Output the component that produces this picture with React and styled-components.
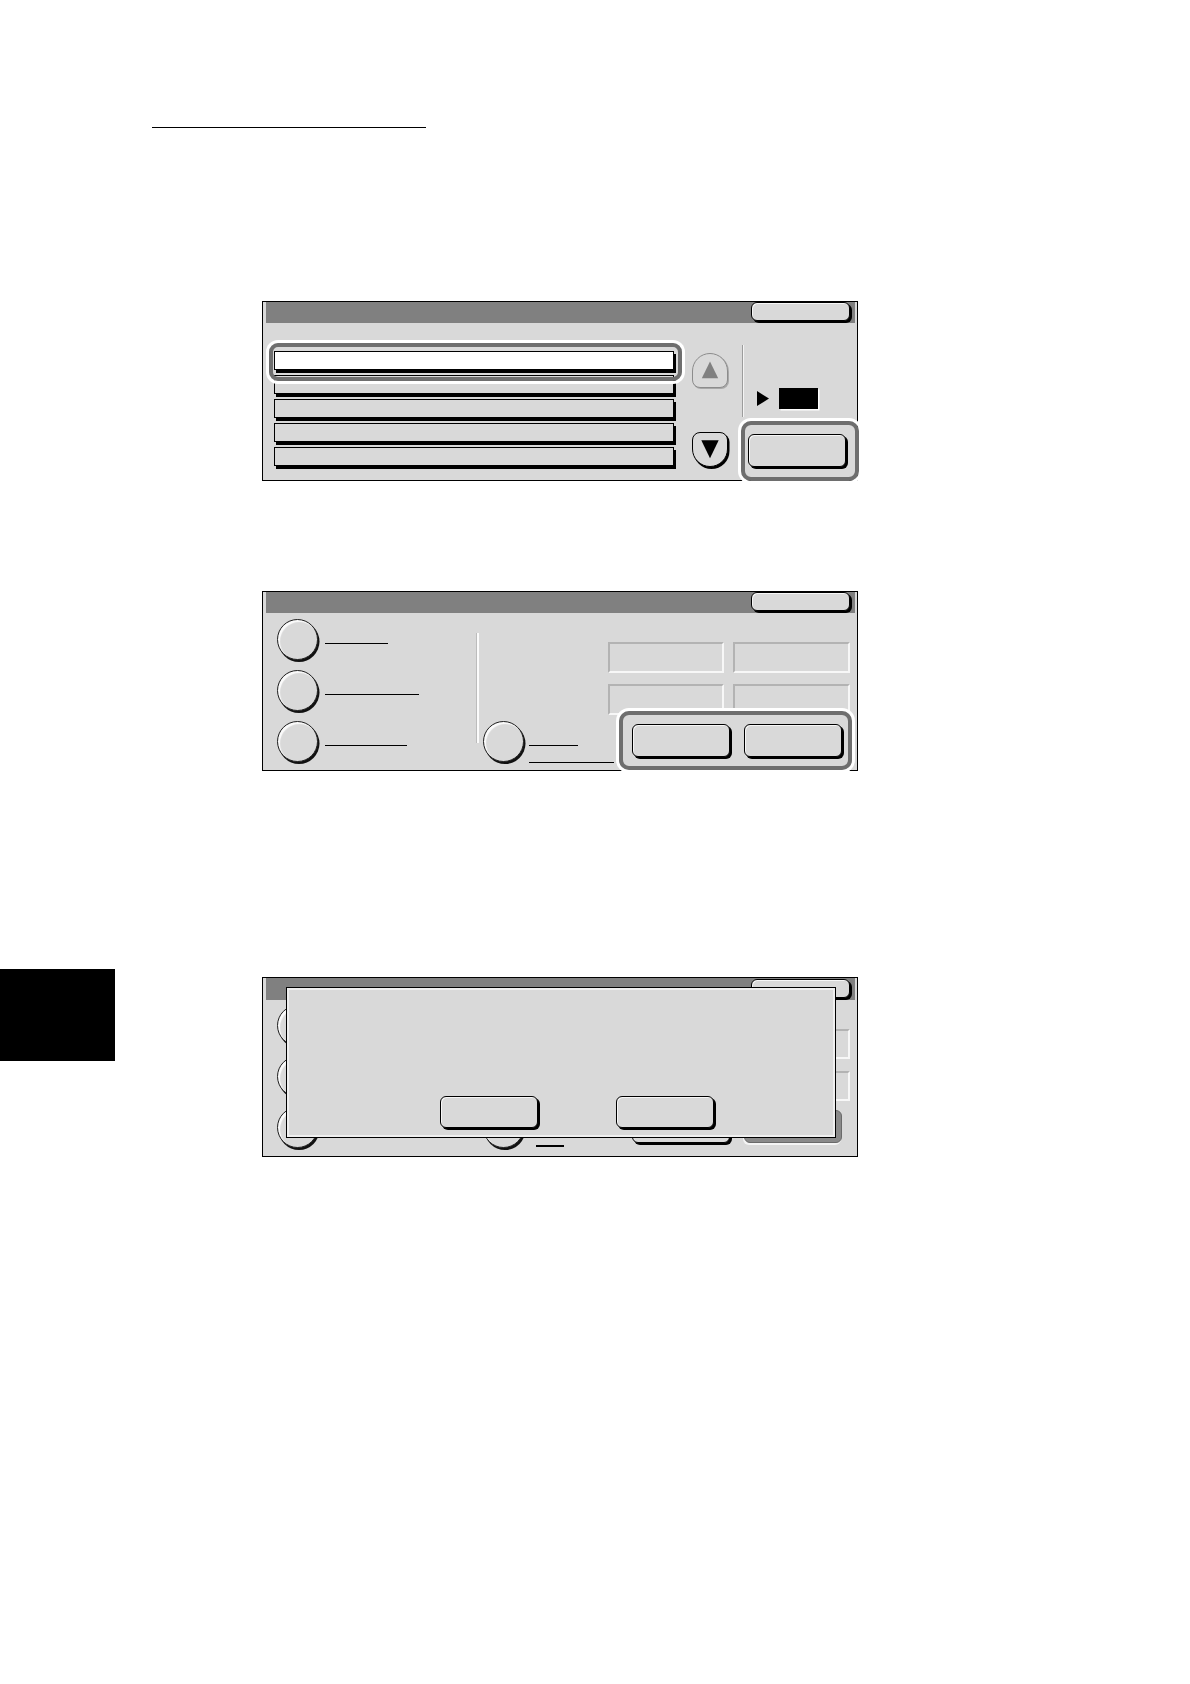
import React from 'react';
import styled, { createGlobalStyle, css } from 'styled-components';

const GlobalStyle = createGlobalStyle`
  html, body {
    margin: 0;
    padding: 0;
    background: #fff;
  }
  body {
    font-family: "Liberation Sans", Arial, sans-serif;
  }
`;

const Page = styled.div`
  width: 1190px;
  min-height: 1684px;
  box-sizing: border-box;
  padding-top: 127px;
  display: flex;
  flex-direction: column;
  align-items: flex-start;
`;

const HeadingRule = styled.div`
  width: 274px;
  margin-left: 152px;
  border-top: 1.3px solid #000;
`;

const Screen = styled.div`
  position: relative;
  box-sizing: border-box;
  width: 596px;
  height: ${p => p.$height}px;
  margin-top: ${p => p.$top}px;
  margin-left: ${p => p.$left}px;
  border: 1px solid #000;
  background: #d9d9d9;
  padding: 0 2px 2px 2.5px;
  display: flex;
  flex-direction: column;
  flex-shrink: 0;
`;

const TitleBar = styled.div`
  flex-shrink: 0;
  height: 21.5px;
  box-sizing: border-box;
  padding: 0.5px 5.5px 0 0;
  background: #808080;
  display: flex;
  justify-content: flex-end;
  align-items: flex-start;
`;

const Key = styled.div`
  flex-shrink: 0;
  box-sizing: border-box;
  width: ${p => p.$w || 98}px;
  height: ${p => p.$h || 33}px;
  border: 1px solid #000;
  border-radius: 6px;
  background: #d9d9d9;
  box-shadow: inset 1px 1px 0 #f6f6f6, 2px 2px 0 #000;
  ${p => p.$selected && css`
    border-color: #6a6a6a;
    background: #8a8a8a;
    box-shadow: -1px 2px 0 #f4f4f4;
  `}
`;

const Focus = styled.div`
  position: relative;
  z-index: 1;
  flex-shrink: 0;
  box-sizing: border-box;
  display: flex;
  align-items: flex-start;
  width: ${p => p.$w}px;
  height: ${p => p.$h}px;
  margin: ${p => p.$margin};
  padding: ${p => p.$pad};
  gap: ${p => p.$gap || 0}px;
  border: 4px solid ${p => (p.$on ? '#6e6e6e' : 'transparent')};
  border-radius: 10px;
  box-shadow: ${p => (p.$on ? '0 0 0 3px #fff' : 'none')};
`;

const Divider = styled.div`
  flex-shrink: 0;
  width: ${p => (p.$light ? 2 : 1)}px;
  height: ${p => p.$h}px;
  margin-top: ${p => p.$top}px;
  margin-left: ${p => p.$gap || 0}px;
  background: ${p => (p.$light ? '#fbfbfb' : '#9c9c9c')};
  box-shadow: ${p => (p.$light ? '-1px 0 0 #bcbcbc' : '1px 0 0 #f4f4f4')};
`;

/* list screen */

const ScreenBody = styled.div`
  flex: 1;
  display: flex;
  align-items: flex-start;
`;

const RowList = styled.div`
  flex-shrink: 0;
  display: flex;
  flex-direction: column;
  gap: 5px;
  margin: 27.8px 0 0 8.3px;
`;

const ListRow = styled.div`
  position: relative;
  box-sizing: border-box;
  width: 400px;
  height: 19px;
  border: 1px solid #000;
  background: ${p => (p.$active ? '#fff' : '#d9d9d9')};
  box-shadow: 2px 3px 0 #000;
  ${p => p.$active && css`
    z-index: 1;
    &::after {
      content: '';
      position: absolute;
      left: -6px;
      top: -8.7px;
      right: -8.7px;
      bottom: -12px;
      border: 4px solid #6e6e6e;
      border-radius: 9px;
      box-shadow: 0 0 0 3px #fff;
    }
  `}
`;

const ScrollCol = styled.div`
  flex-shrink: 0;
  display: flex;
  flex-direction: column;
  gap: 43.4px;
  margin: 29.5px 0 0 18.3px;
`;

const ScrollKey = styled.div`
  box-sizing: border-box;
  width: 36px;
  height: 35.5px;
  display: flex;
  align-items: center;
  justify-content: center;
  background: #d9d9d9;
  border: 1.5px solid ${p => (p.$disabled ? '#8c8c8c' : '#000')};
  border-radius: ${p => (p.$dir === 'up' ? '18px 18px 8px 8px' : '8px 8px 18px 18px')};
  box-shadow: ${p => (p.$disabled ? '1px 1px 0 #a8a8a8' : '1.5px 2px 0 #000')};
`;

const SideCol = styled.div`
  display: flex;
  flex-direction: column;
  align-items: flex-start;
  margin-top: 65.1px;
  padding-left: 14px;
`;

const Counter = styled.div`
  display: flex;
  align-items: center;
  gap: 10.7px;
`;

const CounterValue = styled.div`
  width: 38.7px;
  height: 20.7px;
  background: #000;
  box-shadow: 1.5px 1.5px 0 #fff;
`;

/* options screen */

const RadioCol = styled.div`
  flex-shrink: 0;
  box-sizing: border-box;
  width: 211px;
  padding: 5.5px 0 0 11px;
  display: flex;
  flex-direction: column;
  gap: 8px;
`;

const RadioRow = styled.div`
  display: flex;
  align-items: flex-start;
  height: 43px;
`;

const Radio = styled.div`
  flex-shrink: 0;
  box-sizing: border-box;
  width: 41px;
  height: 41px;
  border-radius: 50%;
  border: 1px solid #222;
  background: #d9d9d9;
  box-shadow: inset 2px 2px 1px #fbfbfb, 1.5px 2px 0 #111;
`;

const LeaderStack = styled.div`
  display: flex;
  flex-direction: column;
  align-items: flex-start;
`;

const Leader = styled.div`
  width: ${p => p.$w}px;
  height: 1.2px;
  background: #000;
  margin-top: ${p => p.$top}px;
  margin-left: ${p => p.$gap}px;
`;

const MidCol = styled.div`
  flex-shrink: 0;
  box-sizing: border-box;
  width: 129.6px;
  padding: 107.5px 0 0 4.6px;
`;

const RightCol = styled.div`
  flex-shrink: 0;
  display: flex;
  flex-direction: column;
  align-items: flex-start;
  padding-top: 28.8px;
`;

const FieldGrid = styled.div`
  display: grid;
  grid-template-columns: 115.7px 116.7px;
  grid-auto-rows: 30.4px;
  column-gap: 9.3px;
  row-gap: 11.6px;
`;

const Field = styled.div`
  box-sizing: border-box;
  border-style: solid;
  border-width: 2px;
  border-color: #b3b3b3 #f7f7f7 #f7f7f7 #b3b3b3;
  background: #d9d9d9;
`;

/* dialog */

const TabRow = styled.div`
  display: flex;
  align-items: flex-start;
  margin-top: 197.7px;
`;

const SectionTab = styled.div`
  flex-shrink: 0;
  width: 115px;
  height: 91.7px;
  background: #000;
`;

const Dialog = styled.div`
  position: absolute;
  z-index: 2;
  left: 23px;
  top: 8.7px;
  box-sizing: border-box;
  width: 549.5px;
  height: 151.5px;
  border: 1px solid #000;
  background: #d9d9d9;
  box-shadow: inset 0 0 0 2px #efefef;
  display: flex;
  align-items: flex-end;
  gap: 78.5px;
  padding: 0 0 9.5px 152.6px;
`;

const UpIcon = () => (
  <svg width="18" height="18" viewBox="0 0 18 18">
    <polygon points="9,0.5 17.2,17.3 0.8,17.3" fill="#808080" />
  </svg>
);

const DownIcon = () => (
  <svg width="18" height="18.5" viewBox="0 0 18 18.5">
    <polygon points="0.3,0.3 17.7,0.3 9,18.2" fill="#000" />
  </svg>
);

const PointerIcon = () => (
  <svg width="12" height="15" viewBox="0 0 12 15">
    <polygon points="0,0 12,7.5 0,15" fill="#000" />
  </svg>
);

function OptionsBody({ highlighted, selected, midLeaders }) {
  return (
    <ScreenBody>
      <RadioCol>
        {[62.7, 94, 81.7].map((w, i) => (
          <RadioRow key={i}>
            <Radio />
            <Leader $w={w} $top={24} $gap={7.3} />
          </RadioRow>
        ))}
      </RadioCol>
      <Divider $light $h={110} $top={19.8} />
      <MidCol>
        <RadioRow>
          <Radio />
          <LeaderStack>
            {midLeaders.map((l, i) => (
              <Leader key={i} $w={l.w} $top={l.top} $gap={l.gap} />
            ))}
          </LeaderStack>
        </RadioRow>
      </MidCol>
      <RightCol>
        <FieldGrid>
          <Field />
          <Field />
          <Field />
          <Field />
        </FieldGrid>
        <Focus
          $on={highlighted}
          $w={232.7}
          $h={59}
          $margin="-3.7px 0 0 10.7px"
          $pad="9px 0 0 9.3px"
          $gap={13.7}
        >
          <Key />
          <Key $selected={selected} />
        </Focus>
      </RightCol>
    </ScreenBody>
  );
}

export default function App() {
  return (
    <Page>
      <GlobalStyle />
      <HeadingRule />

      <Screen $height={180.6} $top={172.7} $left={262.2}>
        <TitleBar>
          <Key $w={99} $h={19} />
        </TitleBar>
        <ScreenBody>
          <RowList>
            <ListRow $active />
            <ListRow />
            <ListRow />
            <ListRow />
            <ListRow />
          </RowList>
          <ScrollCol>
            <ScrollKey $dir="up" $disabled>
              <UpIcon />
            </ScrollKey>
            <ScrollKey $dir="down">
              <DownIcon />
            </ScrollKey>
          </ScrollCol>
          <Divider $h={72} $top={21.8} $gap={13.4} />
          <SideCol>
            <Counter>
              <PointerIcon />
              <CounterValue />
            </Counter>
            <Focus $on $w={118.6} $h={59.3} $margin="12.3px 0 0 -16px" $pad="8.3px 0 0 3.6px">
              <Key $w={98} $h={33} />
            </Focus>
          </SideCol>
        </ScreenBody>
      </Screen>

      <Screen $height={180.3} $top={109.7} $left={262.2}>
        <TitleBar>
          <Key $w={99} $h={19} />
        </TitleBar>
        <OptionsBody
          highlighted
          midLeaders={[
            { w: 48.7, top: 24, gap: 4.7 },
            { w: 85, top: 15.5, gap: 4.7 },
          ]}
        />
      </Screen>

      <TabRow>
        <SectionTab />
        <Screen $height={179.4} $top={8.3} $left={147.2}>
          <TitleBar>
            <Key $w={99} $h={19} />
          </TitleBar>
          <OptionsBody
            selected
            midLeaders={[
              { w: 48.7, top: 24, gap: 4.7 },
              { w: 28, top: 13, gap: 11.7 },
            ]}
          />
          <Dialog>
            <Key $w={98} $h={32} />
            <Key $w={98} $h={32} />
          </Dialog>
        </Screen>
      </TabRow>
    </Page>
  );
}
